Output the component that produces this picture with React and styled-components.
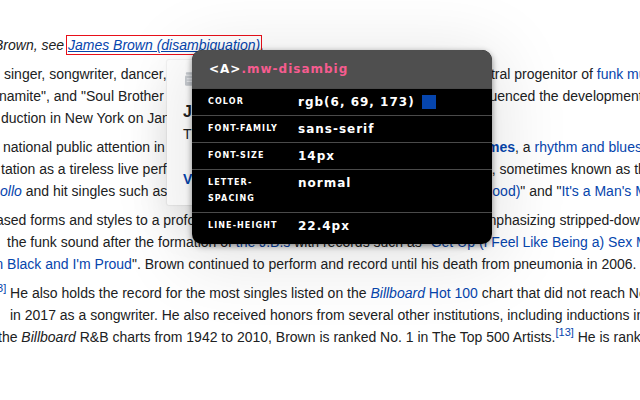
import styled, { createGlobalStyle } from "styled-components";

const GlobalStyle = createGlobalStyle`
    html, body {
        margin: 0;
        padding: 0;
        background: #ffffff;
    }
`

const rows = [
    { label: "color", value: "rgb(6, 69, 173)", swatch: "#0645ad" },
    { label: "font-family", value: "sans-serif" },
    { label: "font-size", value: "14px" },
    { label: "letter-spacing", value: "normal" },
    { label: "line-height", value: "22.4px" },
]

export default function App() {
    return (
        <Page>
            <GlobalStyle />
            <Article>
                <Hatnote $x={-6}>
                    Brown, see <Selected href="#">James Brown (disambiguation)</Selected>.
                </Hatnote>

                <Para>
                    <Line $x={4}>singer, songwriter, dancer, musician, record producer and bandleader. The central progenitor of <Link>funk music</Link> and a major figure</Line>
                    <Line $x={-1}>namite", and "Soul Brother No. 1". In a career that lasted over fifty years, he influenced the development of several music genres.</Line>
                    <Line $x={1}>duction in New York on January 23, 1986.</Line>
                </Para>

                <Para>
                    <Line $x={3}>national public attention in the late 1950s as lead singer with <Link><b>The Famous Flames</b></Link>, a <Link>rhythm and blues</Link> vocal group</Line>
                    <Line $x={1}>tation as a tireless live performer for The Famous Flames and his backing band, sometimes known as the James Brown Band</Line>
                    <Line $x={0}><Link><i>ollo</i></Link> and hit singles such as "<Link>Papa's Got a Brand New Bag</Link>", "<Link>I Got You (I Feel Good)</Link>" and "<Link>It's a Man's Man's Man's World</Link>".</Line>
                </Para>

                <Para>
                    <Line $x={-4}>ased forms and styles to a profoundly Africanized approach to music-making, emphasizing stripped-down interlocking rhythms</Line>
                    <Line $x={7}>the funk sound after the formation of <Link>the J.B.s</Link> with records such as "<Link>Get Up (I Feel Like Being a) Sex Machine</Link>"</Line>
                    <Line $x={-8.5}><Link>m Black and I'm Proud</Link>". Brown continued to perform and record until his death from pneumonia in 2006.</Line>
                </Para>

                <Para>
                    <Line $x={-6}><Ref>[3]</Ref> He also holds the record for the most singles listed on the <Link><i>Billboard</i> Hot 100</Link> chart that did not reach No. 1.</Line>
                    <Line $x={10}>in 2017 as a songwriter. He also received honors from several other institutions, including inductions into the</Line>
                    <Line $x={-2}>the <i>Billboard</i> R&amp;B charts from 1942 to 2010, Brown is ranked No. 1 in The Top 500 Artists.<Ref>[13]</Ref> He is ranked</Line>
                </Para>
            </Article>

            <Preview>
                <PreviewIcon viewBox="0 0 14 16">
                    <rect x="1" y="0" width="12" height="3" rx="1" fill="#c8ccd1" />
                    <rect x="0" y="4" width="14" height="12" rx="1.5" fill="#c8ccd1" />
                    <rect x="2" y="7" width="10" height="1.5" fill="#eaecf0" />
                    <rect x="2" y="10" width="10" height="1.5" fill="#eaecf0" />
                </PreviewIcon>
                <PreviewTitle>James Brown</PreviewTitle>
                <PreviewText>The following is a list of people named James Brown</PreviewText>
                <PreviewMore>View similar articles</PreviewMore>
            </Preview>

            <Inspector>
                <InspectorHead>
                    <span>&lt;A&gt;</span><Klass>.mw-disambig</Klass>
                </InspectorHead>
                {rows.map(row => (
                    <InspectorRow key={row.label}>
                        <Label>{row.label}</Label>
                        <Value>
                            {row.value}
                            {row.swatch && <Swatch style={{ background: row.swatch }} />}
                        </Value>
                    </InspectorRow>
                ))}
            </Inspector>
        </Page>
    )
}

const Page = styled.div`
    position: relative;
    width: 640px;
    height: 400px;
    overflow: hidden;
    background: #ffffff;
`

const Article = styled.div`
    padding-top: 34px;
    font-family: "Liberation Sans", Arial, sans-serif;
    font-size: 14px;
    line-height: 22px;
    color: #202122;
`

const Hatnote = styled.div`
    margin-left: ${props => props.$x}px;
    font-style: italic;
    white-space: nowrap;
`

const Selected = styled.a`
    color: #0645ad;
    text-decoration: underline;
    outline: 1px solid #e8101a;
    outline-offset: 1px;
`

const Para = styled.div`
    margin: 7px 0;
`

const Line = styled.div`
    margin-left: ${props => props.$x}px;
    white-space: nowrap;
`

const Link = styled.span`
    color: #0645ad;
`

const Ref = styled.sup`
    color: #0645ad;
    font-size: 11px;
    line-height: 1;
`

const Preview = styled.div`
    position: absolute;
    left: 167px;
    top: 60px;
    width: 300px;
    height: 145px;
    box-sizing: border-box;
    padding: 12px 16px;
    overflow: hidden;
    background: #ffffff;
    border-radius: 2px;
    box-shadow: 0 0 1px 1px rgba(0, 0, 0, 0.05), 0 20px 50px -12px rgba(0, 0, 0, 0.2);
    font-family: "Liberation Sans", Arial, sans-serif;
    color: #202122;
    white-space: nowrap;
`

const PreviewIcon = styled.svg`
    display: block;
    width: 12px;
    height: 14px;
    margin: 0 0 0 2px;
`

const PreviewTitle = styled.div`
    margin-top: 15px;
    font-size: 16px;
    font-weight: bold;
    line-height: 22px;
`

const PreviewText = styled.div`
    font-size: 14px;
    line-height: 22px;
`

const PreviewMore = styled.div`
    margin-top: 23px;
    font-size: 14px;
    font-weight: bold;
    line-height: 22px;
    color: #0645ad;
`

const Inspector = styled.div`
    position: absolute;
    left: 192px;
    top: 50px;
    width: 300px;
    padding-bottom: 5px;
    background: #000000;
    border-radius: 10px;
    overflow: hidden;
    box-shadow: 0 2px 6px rgba(0, 0, 0, 0.45), 0 10px 70px 10px rgba(0, 0, 0, 0.1);
    font-family: "DejaVu Sans", Verdana, sans-serif;
    font-weight: bold;
    color: #ffffff;
`

const InspectorHead = styled.div`
    height: 38px;
    display: flex;
    align-items: center;
    padding: 0 17px;
    background: #4f4f4f;
    font-size: 12px;
    letter-spacing: 1px;
`

const Klass = styled.span`
    color: #f65c8f;
`

const InspectorRow = styled.div`
    display: grid;
    grid-template-columns: 80px 1fr;
    column-gap: 10px;
    align-items: start;
    padding: 5px 16px;
    border-top: 1px solid #4a4a4a;

    &:first-of-type {
        border-top: none;
        padding-top: 6px;
        padding-bottom: 7px;
    }
`

const Label = styled.div`
    font-size: 8px;
    line-height: 16px;
    letter-spacing: 1.1px;
    text-transform: uppercase;
`

const Value = styled.div`
    display: flex;
    align-items: center;
    gap: 7px;
    font-size: 12px;
    line-height: 16px;
    letter-spacing: 1px;
`

const Swatch = styled.span`
    width: 14px;
    height: 14px;
`
